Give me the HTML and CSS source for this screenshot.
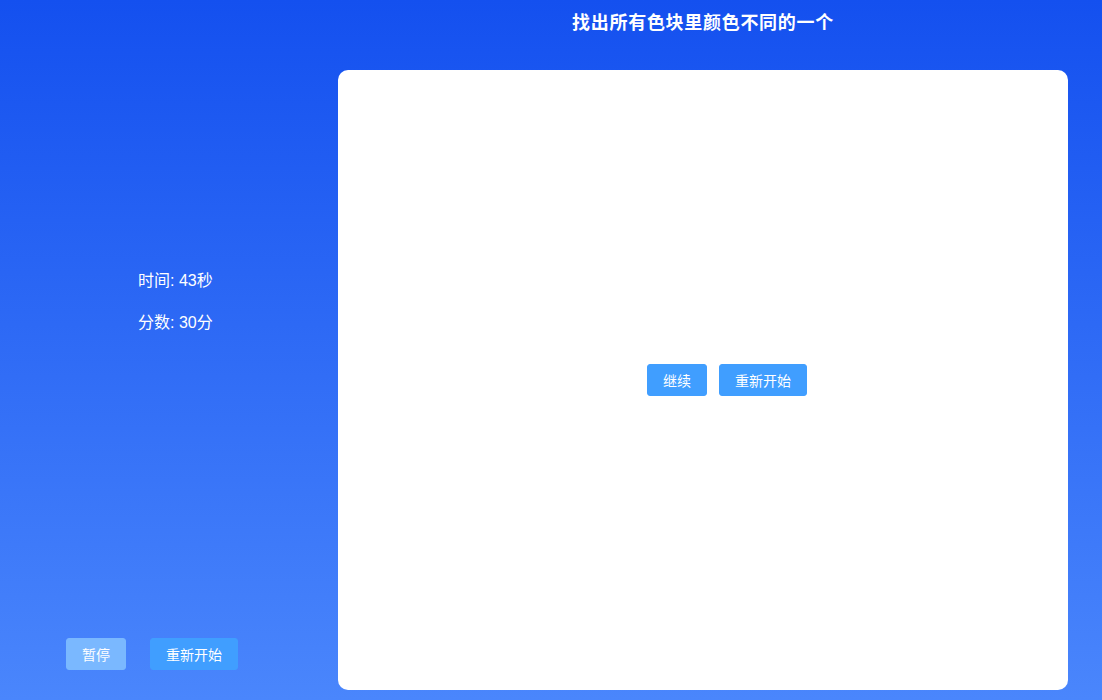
FILE: index.html
```html
<!DOCTYPE html>
<html lang="zh">
<head>
<meta charset="utf-8">
<link rel="stylesheet" href="styles.css">
</head>
<body>
<div class="page">
  <aside class="side">
    <div class="stats">
      <p class="stat">时间: 43秒</p>
      <p class="stat">分数: 30分</p>
    </div>
    <div class="side-actions">
      <button class="btn btn-disabled">暂停</button>
      <button class="btn">重新开始</button>
    </div>
  </aside>
  <main class="main">
    <h1 class="title">找出所有色块里颜色不同的一个</h1>
    <section class="board">
      <div class="board-actions">
        <button class="btn">继续</button>
        <button class="btn">重新开始</button>
      </div>
    </section>
  </main>
</div>
</body>
</html>
```

FILE: styles.css
```css
* { box-sizing: border-box; }
html, body { margin: 0; padding: 0; }
body {
  font-family: "Liberation Sans", "Noto Sans CJK SC", sans-serif;
  color: #fff;
  background: linear-gradient(180deg, #1450ef 0%, #4a86fc 100%);
  height: 700px;
  overflow: hidden;
}
.page {
  display: flex;
  height: 700px;
}
.side {
  width: 338px;
  display: flex;
  flex-direction: column;
  padding: 0 0 30px 66px;
}
.stats {
  margin-top: 270px;
  padding-left: 72px;
  display: flex;
  flex-direction: column;
  gap: 20px;
}
.stat {
  margin: 0;
  font-size: 16px;
  line-height: 22px;
}
.side-actions {
  margin-top: auto;
  display: flex;
  gap: 24px;
}
.btn {
  font-family: "Noto Sans CJK SC", sans-serif;
  font-size: 14px;
  line-height: 14px;
  height: 32px;
  padding: 0 15px;
  border: 1px solid #409eff;
  background: #409eff;
  color: #fff;
  border-radius: 3px;
}
.btn-disabled {
  background: #7ab8ff;
  border-color: #7ab8ff;
}
.main {
  flex: 1;
  display: flex;
  flex-direction: column;
  padding: 0 34px 10px 0;
}
.title {
  margin: 0;
  height: 70px;
  padding-top: 9px;
  text-align: center;
  font-family: "Noto Sans CJK SC", sans-serif;
  font-size: 18px;
  letter-spacing: 0.7px;
  line-height: 24px;
  font-weight: 700;
}
.board {
  flex: 1;
  background: #fff;
  border-radius: 10px;
  display: flex;
  align-items: center;
  justify-content: center;
}
.board-actions {
  display: flex;
  gap: 12px;
  margin-left: 48px;
}
```
